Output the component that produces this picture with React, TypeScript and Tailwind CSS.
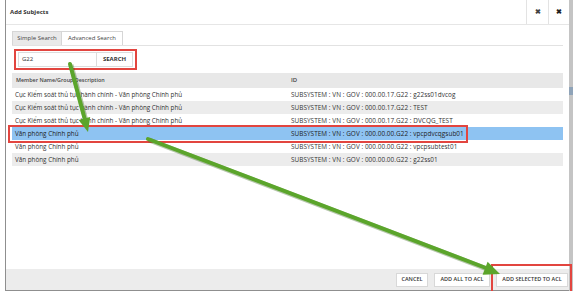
const rows = [
  { name: 'Cục Kiểm soát thủ tục hành chính - Văn phòng Chính phủ', id: 'SUBSYSTEM : VN : GOV : 000.00.17.G22 : g22ss01dvcog' },
  { name: 'Cục Kiểm soát thủ tục hành chính - Văn phòng Chính phủ', id: 'SUBSYSTEM : VN : GOV : 000.00.17.G22 : TEST' },
  { name: 'Cục Kiểm soát thủ tục hành chính - Văn phòng Chính phủ', id: 'SUBSYSTEM : VN : GOV : 000.00.17.G22 : DVCQG_TEST' },
  { name: 'Văn phòng Chính phủ', id: 'SUBSYSTEM : VN : GOV : 000.00.00.G22 : vpcpdvcqgsub01' },
  { name: 'Văn phòng Chính phủ', id: 'SUBSYSTEM : VN : GOV : 000.00.00.G22 : vpcpsubtest01' },
  { name: 'Văn phòng Chính phủ', id: 'SUBSYSTEM : VN : GOV : 000.00.00.G22 : g22ss01' },
];

const SELECTED = 3;

const Arrows = () => (
  <svg className="pointer-events-none absolute inset-0" width="575" height="291">
    <g stroke="#2f5f12" strokeOpacity="0.35" strokeWidth="5" fill="none" transform="translate(1,1)">
      <line x1="70" y1="64" x2="85" y2="120" />
      <line x1="148" y1="139" x2="486" y2="268" />
    </g>
    <g stroke="#5ba52b" strokeWidth="4" strokeLinecap="round" fill="none">
      <line x1="70" y1="64" x2="85" y2="120" />
      <line x1="148" y1="139" x2="486" y2="268" />
    </g>
    <polygon points="88,132 78.6,120 90.2,117" fill="#5ba52b" />
    <polygon points="500,274 482.6,274.8 487.6,261.8" fill="#5ba52b" />
  </svg>
);

const App = () => {
  return (
    <div className="relative h-[291px] w-[575px] overflow-hidden bg-white font-['Open_Sans',sans-serif] text-[#333]">
      <div className="flex h-full pl-[5px]">
        <div className="flex flex-1 flex-col border-b border-l border-[#8f8f8f]">
          {/* header */}
          <div className="flex h-[25px] shrink-0 items-center border-b border-[#e6e6e6]">
            <div className="flex-1 pl-[4px] text-[6px] font-bold text-[#333]">Add Subjects</div>
            <div className="flex h-full">
              <button className="flex w-[22px] items-center justify-center border-l border-[#e3e3e3] text-[7px] font-bold text-[#444]">
                ✖
              </button>
              <button className="flex w-[21px] items-center justify-center border-l border-[#e3e3e3] text-[7px] font-bold text-[#222]">
                ✖
              </button>
            </div>
          </div>

          {/* body */}
          <div className="flex flex-1 flex-col px-[6px] pt-[6px]">
            <div className="flex h-[14px] text-[6px]">
              <div className="flex w-[50px] items-center justify-center border border-b-0 border-[#d6d6d6] bg-[#e9e9e9] text-[#444]">
                Simple Search
              </div>
              <div className="flex w-[61px] items-center justify-center border border-b-0 border-l-0 border-[#d6d6d6] text-[#444]">
                Advanced Search
              </div>
            </div>
            <div className="flex-1 border-t border-[#e2e2e2]">
              <div className="flex pl-[6px] pt-[6px]">
                <div className="flex h-[15px] w-[79px] items-center border border-[#dcdcdc] pl-[3px] text-[6px]">G22</div>
                <button className="flex h-[15px] w-[36px] items-center justify-center border border-l-0 border-[#dcdcdc] text-[6px] font-bold text-[#333]">
                  SEARCH
                </button>
              </div>

              <div className="mt-[6px]">
                <div className="flex h-[15px] items-center bg-[#e8e8e8] text-[5.4px] font-semibold text-[#444]">
                  <div className="w-[279px] pl-[4px]">Member Name/Group Description</div>
                  <div className="text-[6px]">ID</div>
                </div>
                {rows.map((r, i) => (
                  <div
                    key={i}
                    className={`flex h-[13px] items-center ${
                      i === SELECTED ? 'bg-[#8ec3f2] text-[#222]' : i % 2 === 1 ? 'bg-[#ececec]' : 'bg-white'
                    }`}
                  >
                    <div className="w-[279px] pl-[3px] text-[6.3px]">{r.name}</div>
                    <div className="text-[6.4px] tracking-[0.05px]">{r.id}</div>
                  </div>
                ))}
              </div>
            </div>
          </div>

          {/* footer */}
          <div className="flex h-[21px] shrink-0 items-center justify-end gap-[6px] bg-[#ececec] pr-[1px] text-[5.5px] font-semibold text-[#333]">
            <button className="flex h-[14px] w-[32px] items-center justify-center border border-[#d8d8d8] bg-white">CANCEL</button>
            <button className="flex h-[14px] w-[56px] items-center justify-center border border-[#d8d8d8] bg-white">
              ADD ALL TO ACL
            </button>
            <button className="flex h-[14px] w-[72px] items-center justify-center border border-[#d8d8d8] bg-white">
              ADD SELECTED TO ACL
            </button>
          </div>
        </div>
        <div className="w-[4px] bg-[#c4c4c4]">
          <div className="mt-[87px] h-[8px] bg-[#8fa3b8]" />
        </div>
        <div className="w-[2px]" />
      </div>

      {/* annotations */}
      <div className="pointer-events-none absolute left-[14px] top-[49px] h-[21px] w-[123px] border-2 border-[#e2453f]" />
      <div className="pointer-events-none absolute left-[8px] top-[125px] h-[18px] w-[460px] border-2 border-[#e2453f]" />
      <div className="pointer-events-none absolute left-[491px] top-[264px] h-[30px] w-[81px] border-2 border-[#e2453f]" />
      <Arrows />
    </div>
  );
};

export default App;
